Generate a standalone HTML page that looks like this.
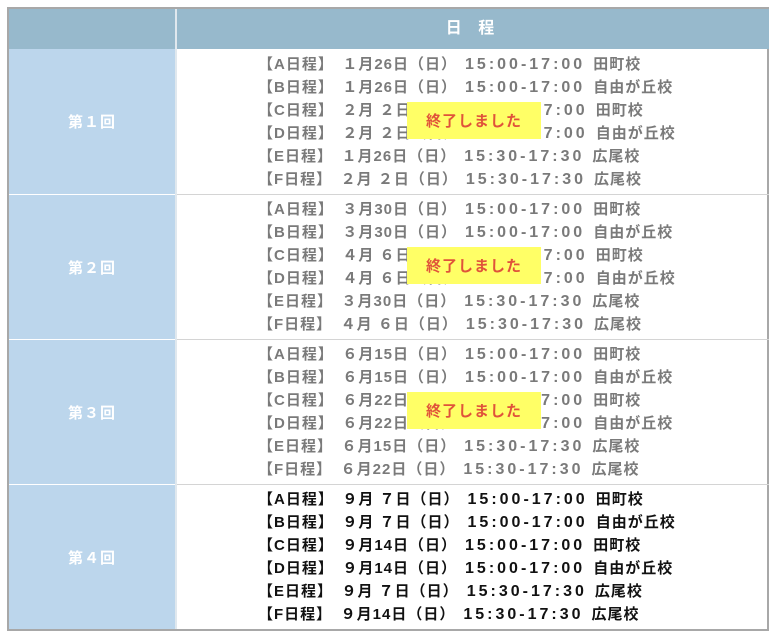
<!DOCTYPE html>
<html><head><meta charset="utf-8"><style>
*{margin:0;padding:0;box-sizing:border-box}
body{width:774px;height:638px;background:#fff;position:relative;overflow:hidden;font-family:"Liberation Sans","Noto Sans CJK JP",sans-serif;}
.tbl{position:absolute;left:7px;top:7px;width:762px;height:624px;border:2px solid #a8a8a8;background:#fff}
.hd{position:absolute;top:0;height:40px;background:#97b9cc}
.lc{position:absolute;left:0;width:166px;background:#bcd6ec;color:#fff;font-weight:bold;font-size:15px;display:flex;align-items:center;justify-content:center;letter-spacing:1px}
.line{position:absolute;left:0;width:100%;height:1px;background:#d4d4d4}
.txt{position:absolute;left:82px;font-size:15px;font-weight:bold;letter-spacing:1px;line-height:23px;white-space:pre;color:#7a7a7a}
.t{letter-spacing:3px;margin-left:8px;margin-right:8px;font-size:16px}
.blk{color:#111}
.badge{position:absolute;left:398px;width:134px;height:37px;background:#ffff66;color:#e0533a;font-weight:bold;font-size:15px;display:flex;align-items:center;justify-content:center;letter-spacing:1px}
</style></head><body>
<div class="tbl">
<div class="hd" style="left:0;width:166px"></div>
<div class="hd" style="left:168px;width:592px;color:#fff;font-weight:bold;font-size:16px;text-align:center;line-height:40px;letter-spacing:6px">日 程</div>
<div style="position:absolute;left:166px;top:0;width:2px;height:620px;background:#e0e8ee"></div>

<div class="lc" style="top:40px;height:145px">第１回</div>
<div class="lc" style="top:186px;height:144px">第２回</div>
<div class="lc" style="top:331px;height:144px">第３回</div>
<div class="lc" style="top:476px;height:144px">第４回</div>
<div class="line" style="top:185px;left:168px;width:592px"></div>
<div class="line" style="top:330px;left:168px;width:592px"></div>
<div class="line" style="top:475px;left:168px;width:592px"></div>

<div class="txt" style="left:249px;top:44px">【A日程】　１月26日（日）<span class="t">15:00-17:00</span>田町校
【B日程】　１月26日（日）<span class="t">15:00-17:00</span>自由が丘校
【C日程】　２月 ２日（日）<span class="t">15:00-17:00</span>田町校
【D日程】　２月 ２日（日）<span class="t">15:00-17:00</span>自由が丘校
【E日程】　１月26日（日）<span class="t">15:30-17:30</span>広尾校
【F日程】　２月 ２日（日）<span class="t">15:30-17:30</span>広尾校</div>
<div class="badge" style="top:93px">終了しました</div>

<div class="txt" style="left:249px;top:189px">【A日程】　３月30日（日）<span class="t">15:00-17:00</span>田町校
【B日程】　３月30日（日）<span class="t">15:00-17:00</span>自由が丘校
【C日程】　４月 ６日（日）<span class="t">15:00-17:00</span>田町校
【D日程】　４月 ６日（日）<span class="t">15:00-17:00</span>自由が丘校
【E日程】　３月30日（日）<span class="t">15:30-17:30</span>広尾校
【F日程】　４月 ６日（日）<span class="t">15:30-17:30</span>広尾校</div>
<div class="badge" style="top:238px">終了しました</div>

<div class="txt" style="left:249px;top:334px">【A日程】　６月15日（日）<span class="t">15:00-17:00</span>田町校
【B日程】　６月15日（日）<span class="t">15:00-17:00</span>自由が丘校
【C日程】　６月22日（日）<span class="t">15:00-17:00</span>田町校
【D日程】　６月22日（日）<span class="t">15:00-17:00</span>自由が丘校
【E日程】　６月15日（日）<span class="t">15:30-17:30</span>広尾校
【F日程】　６月22日（日）<span class="t">15:30-17:30</span>広尾校</div>
<div class="badge" style="top:383px">終了しました</div>

<div class="txt blk" style="left:249px;top:479px">【A日程】　９月 ７日（日）<span class="t">15:00-17:00</span>田町校
【B日程】　９月 ７日（日）<span class="t">15:00-17:00</span>自由が丘校
【C日程】　９月14日（日）<span class="t">15:00-17:00</span>田町校
【D日程】　９月14日（日）<span class="t">15:00-17:00</span>自由が丘校
【E日程】　９月 ７日（日）<span class="t">15:30-17:30</span>広尾校
【F日程】　９月14日（日）<span class="t">15:30-17:30</span>広尾校</div>
</div>
</body></html>
